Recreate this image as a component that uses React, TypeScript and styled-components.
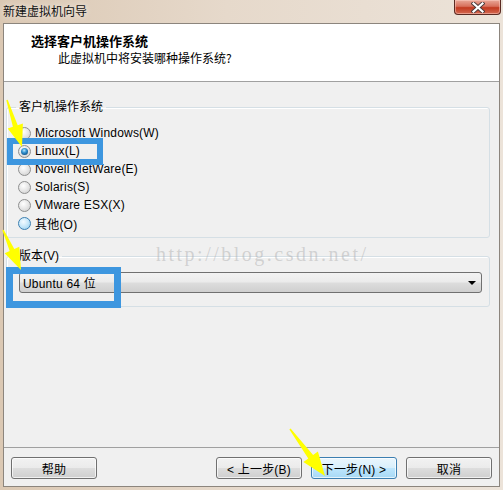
import React from "react";
import styled, { createGlobalStyle } from "styled-components";

const Global = createGlobalStyle`
  html, body { margin: 0; padding: 0; background: #ffffff; }
  body { font-family: "Liberation Sans", "Noto Sans CJK SC", sans-serif; font-size: 12px; color: #000; }
  * { box-sizing: border-box; }
`;

const Window = styled.div`
  position: relative;
  width: 503px;
  height: 490px;
  display: flex;
  flex-direction: column;
  background: linear-gradient(to right, #dbc8b3 0%, #e6d9cb 45%, #ece3d9 100%);
  overflow: hidden;
`;

const TitleBar = styled.div`
  height: 23px;
  display: flex;
  align-items: flex-start;
  justify-content: space-between;
  padding: 0 2px 0 3px;
`;

const TitleText = styled.div`
  font-family: "Noto Sans CJK SC", sans-serif;
  font-size: 12px;
  line-height: 22px;
  color: #111;
  text-shadow: 0 0 6px rgba(255, 255, 255, 0.9);
`;

const CloseButton = styled.div`
  width: 47px;
  height: 15px;
  border: 1px solid #5a2a22;
  border-top: none;
  border-radius: 0 0 4px 4px;
  background: linear-gradient(#e9a898 0%, #d8705c 45%, #c2391f 55%, #d46a52 100%);
  box-shadow: inset 0 0 0 1px rgba(255, 210, 200, 0.5);
  display: flex;
  align-items: center;
  justify-content: center;
`;

const Client = styled.div`
  flex: 1;
  margin: 0 3px 3px 3px;
  border: 1px solid #8c857d;
  background: #f0f0f0;
  display: flex;
  flex-direction: column;
  min-height: 0;
`;

const Header = styled.div`
  height: 58px;
  background: #ffffff;
  border-bottom: 1px solid #a0a0a0;
  padding: 9px 0 0 27px;
  font-family: "Noto Sans CJK SC", sans-serif;
`;

const HeaderTitle = styled.div`
  font-weight: bold;
  font-size: 13px;
  line-height: 16px;
`;

const HeaderSub = styled.div`
  font-size: 12px;
  line-height: 16px;
  padding-left: 27px;
  margin-top: 1px;
`;

const Body = styled.div`
  flex: 1;
  padding: 17px 9px 0 2px;
  display: flex;
  flex-direction: column;
`;

const Group = styled.fieldset<{ $gap?: number; $padTop: number; $padBottom: number }>`
  margin: ${(p) => p.$gap ?? 0}px 0 0 0;
  padding: ${(p) => p.$padTop}px 0 ${(p) => p.$padBottom}px 0;
  border: 1px solid #d5dfe5;
  border-radius: 3px;
  box-shadow: inset 1px 1px 0 #ffffff;
  min-width: 0;
`;

const Legend = styled.legend`
  margin-left: 9px;
  padding: 0 3px;
  font-size: 12px;
  line-height: 16px;
`;

const RadioRow = styled.label`
  height: 18px;
  display: flex;
  align-items: center;
  gap: 4px;
  padding-left: 11px;
  font-size: 12px;
  letter-spacing: 0.2px;
`;

const RadioDot = styled.span<{ $state: "off" | "on" | "hover" }>`
  position: relative;
  width: 13px;
  height: 13px;
  border-radius: 50%;
  flex: none;
  border: 1px solid ${(p) => (p.$state === "hover" ? "#3c7fb1" : "#8e8f8f")};
  background: ${(p) =>
    p.$state === "hover"
      ? "radial-gradient(circle at 40% 35%, #f4fbff 0%, #cbe9fa 45%, #8ecbee 100%)"
      : "radial-gradient(circle at 40% 35%, #ffffff 0%, #e6e6e6 50%, #c9c9c9 100%)"};
  &::after {
    content: "";
    display: ${(p) => (p.$state === "on" ? "block" : "none")};
    position: absolute;
    left: 2px;
    top: 2px;
    width: 7px;
    height: 7px;
    border-radius: 50%;
    background: radial-gradient(circle at 45% 35%, #bfe6fb 0%, #3b9ad6 35%, #0b4f86 80%);
  }
`;

const Combo = styled.div`
  height: 21px;
  margin: 0 7px 0 12px;
  border: 1px solid #707070;
  border-radius: 3px;
  background: linear-gradient(#f2f2f2 0%, #ebebeb 48%, #dddddd 52%, #cfcfcf 100%);
  display: flex;
  align-items: center;
  justify-content: space-between;
  padding: 0 3px 0 3px;
  font-size: 12px;
  letter-spacing: 0.2px;
`;

const ComboArrow = styled.span`
  width: 0;
  height: 0;
  border-left: 4px solid transparent;
  border-right: 4px solid transparent;
  border-top: 4px solid #000;
  margin-right: 2px;
`;

const Footer = styled.div`
  height: 39px;
  border-top: 1px solid #a0a0a0;
  padding: 9px 7px 0 7px;
  display: flex;
  align-items: flex-start;
  justify-content: space-between;
`;

const ButtonGroup = styled.div`
  display: flex;
  gap: 9px;
`;

const Button = styled.div<{ $hot?: boolean }>`
  width: 86px;
  height: 22px;
  border: 1px solid ${(p) => (p.$hot ? "#3c7fb1" : "#707070")};
  border-radius: 3px;
  background: ${(p) =>
    p.$hot
      ? "linear-gradient(#eaf6fd 0%, #d9f0fc 48%, #bee6fd 52%, #a7d9f5 100%)"
      : "linear-gradient(#f2f2f2 0%, #ebebeb 48%, #dddddd 52%, #cfcfcf 100%)"};
  box-shadow: inset 0 0 0 1px rgba(255, 255, 255, 0.7);
  display: flex;
  align-items: center;
  justify-content: center;
  font-size: 12px;
  letter-spacing: 0.2px;
`;

const Watermark = styled.span`
  position: absolute;
  left: 156px;
  top: 243px;
  font-family: "Liberation Serif", serif;
  font-size: 20px;
  letter-spacing: 2.5px;
  color: rgba(170, 170, 170, 0.45);
  pointer-events: none;
`;

const Overlay = styled.svg`
  position: absolute;
  left: 0;
  top: 0;
  pointer-events: none;
`;

type Pt = [number, number];

function arrowPoints(tail: Pt, tip: Pt, headLen: number, headW: number, w0: number, w1: number): string {
  const dx = tip[0] - tail[0];
  const dy = tip[1] - tail[1];
  const len = Math.hypot(dx, dy);
  const ux = dx / len;
  const uy = dy / len;
  const nx = -uy;
  const ny = ux;
  const base: Pt = [tip[0] - ux * headLen, tip[1] - uy * headLen];
  const pts: Pt[] = [
    [tail[0] + nx * w0 / 2, tail[1] + ny * w0 / 2],
    [base[0] + nx * w1 / 2, base[1] + ny * w1 / 2],
    [base[0] + nx * headW / 2, base[1] + ny * headW / 2],
    tip,
    [base[0] - nx * headW / 2, base[1] - ny * headW / 2],
    [base[0] - nx * w1 / 2, base[1] - ny * w1 / 2],
    [tail[0] - nx * w0 / 2, tail[1] - ny * w0 / 2],
  ];
  return pts.map((p) => `${p[0].toFixed(1)},${p[1].toFixed(1)}`).join(" ");
}

const radios: { label: string; state: "off" | "on" | "hover" }[] = [
  { label: "Microsoft Windows(W)", state: "off" },
  { label: "Linux(L)", state: "on" },
  { label: "Novell NetWare(E)", state: "off" },
  { label: "Solaris(S)", state: "off" },
  { label: "VMware ESX(X)", state: "off" },
  { label: "其他(O)", state: "hover" },
];

export default function App() {
  return (
    <>
      <Global />
      <Window>
        <TitleBar>
          <TitleText>新建虚拟机向导</TitleText>
          <CloseButton>
            <svg width="14" height="11" viewBox="0 0 14 11">
              <path d="M2.5 1.5 L11.5 9.5 M11.5 1.5 L2.5 9.5" stroke="#4a3a3a" strokeWidth="4" strokeLinecap="square" />
              <path d="M2.5 1.5 L11.5 9.5 M11.5 1.5 L2.5 9.5" stroke="#ffffff" strokeWidth="2.2" strokeLinecap="square" />
            </svg>
          </CloseButton>
        </TitleBar>
        <Client>
          <Header>
            <HeaderTitle>选择客户机操作系统</HeaderTitle>
            <HeaderSub>此虚拟机中将安装哪种操作系统?</HeaderSub>
          </Header>
          <Body>
            <Group $padTop={9} $padBottom={5}>
              <Legend>客户机操作系统</Legend>
              {radios.map((r) => (
                <RadioRow key={r.label}>
                  <RadioDot $state={r.state} />
                  <span>{r.label}</span>
                </RadioRow>
              ))}
            </Group>
            <Group $gap={10} $padTop={8} $padBottom={13}>
              <Legend>版本(V)</Legend>
              <Combo>
                <span>Ubuntu 64 位</span>
                <ComboArrow />
              </Combo>
            </Group>
          </Body>
          <Footer>
            <Button>帮助</Button>
            <ButtonGroup>
              <Button>&lt; 上一步(B)</Button>
              <Button $hot>下一步(N) &gt;</Button>
              <Button>取消</Button>
            </ButtonGroup>
          </Footer>
        </Client>
        <Watermark>http://blog.csdn.net/</Watermark>
        <Overlay width="503" height="490" viewBox="0 0 503 490">
          <rect x="10" y="141" width="90" height="21" fill="none" stroke="#3d96df" strokeWidth="6" />
          <rect x="9.5" y="270.5" width="108" height="34" fill="none" stroke="#3d96df" strokeWidth="7" />
          <polygon points={arrowPoints([7, 100], [22, 147], 22, 16, 1.5, 5)} fill="#ffff00" />
          <polygon points={arrowPoints([3, 230], [21, 270], 22, 16, 1.5, 5)} fill="#ffff00" />
          <polygon points={arrowPoints([290, 429], [325, 476], 24, 18, 1.5, 6)} fill="#ffff00" />
        </Overlay>
      </Window>
    </>
  );
}
